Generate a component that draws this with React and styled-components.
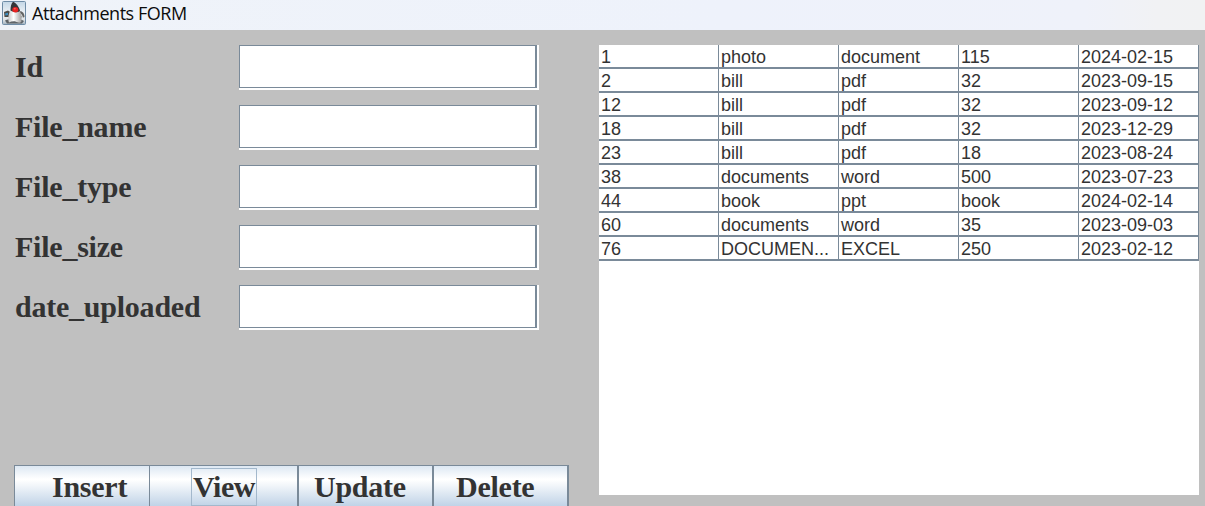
import React from "react";
import styled, { createGlobalStyle } from "styled-components";

const line = "#7a8a99";
const ink = "#333333";

const GlobalStyle = createGlobalStyle`
  * { box-sizing: border-box; }
  body { margin: 0; overflow: hidden; background: #c0c0c0; }
`;

const Window = styled.div`
  display: flex;
  flex-direction: column;
  width: 1205px;
  height: 506px;
  overflow: hidden;
  background: #c0c0c0;
`;

const TitleBar = styled.header`
  display: flex;
  align-items: flex-start;
  flex: 0 0 30px;
  padding-left: 2px;
  gap: 6px;
  background: linear-gradient(90deg, #eff3f9 0%, #eef2fb 60%, #eff2fa 90%, #f1f2f4 96%, #f1f2f3 100%);
`;

const AppIcon = styled.svg`
  display: block;
  width: 24px;
  height: 25px;
`;

const Title = styled.span`
  font: 18px/27px "Open Sans", "Noto Sans", sans-serif;
  letter-spacing: -0.45px;
  color: #0c0c0c;
  white-space: nowrap;
`;

const Content = styled.main`
  display: flex;
  flex: 1;
  min-height: 0;
  justify-content: space-between;
  padding: 15px 6px 0 14px;
`;

const Form = styled.form`
  display: flex;
  flex-direction: column;
  justify-content: space-between;
  width: 555px;
`;

const Fields = styled.div`
  display: flex;
  flex-direction: column;
  gap: 15px;
`;

const Field = styled.label`
  display: grid;
  grid-template-columns: 225px 300px;
  height: 45px;
`;

const Label = styled.span`
  padding-left: 1px;
  font: bold 30px/44px "Liberation Serif", "Times New Roman", serif;
  letter-spacing: -0.23px;
  color: ${ink};
`;

const InputFrame = styled.span`
  display: block;
  padding: 0 2px 2px 0;
  background: #fff;
`;

const Input = styled.input`
  display: block;
  width: 100%;
  height: 100%;
  padding: 0 6px;
  border: solid ${line};
  border-width: 1px 2px 1px 1px;
  border-radius: 0;
  outline: none;
  background: #fff;
  font: 18px "Liberation Sans", Arial, sans-serif;
`;

const ButtonBar = styled.div`
  display: flex;
  height: 41px;
`;

const Button = styled.button`
  width: ${(p) => p.$width}px;
  padding: 2px 0 0 ${(p) => p.$inset}px;
  border: solid ${line};
  border-width: 1px ${(p) => p.$edge}px 0 ${(p) => (p.$first ? 1 : 0)}px;
  border-radius: 0;
  background: linear-gradient(#dde8f3 0, #ffffff 13px, #ffffff 14px, #c0d3e7 40px);
  text-align: left;
  font: bold 30px/36px "Liberation Serif", "Times New Roman", serif;
  letter-spacing: -0.25px;
  color: ${ink};
`;

const Caption = styled.span`
  display: block;
  width: ${(p) => (p.$focused ? "66px" : "max-content")};
  height: 38px;
  padding-left: ${(p) => (p.$focused ? 1 : 0)}px;
  border: 1px solid ${(p) => (p.$focused ? "#a3b8cc" : "transparent")};
  letter-spacing: ${(p) => (p.$focused ? "-0.5px" : "inherit")};
`;

const TablePane = styled.section`
  width: 600px;
  height: 450px;
  background: #fff;
`;

const Table = styled.div`
  display: grid;
  grid-template-columns: repeat(5, 120px);
  grid-auto-rows: 24px;
`;

const Cell = styled.div`
  padding: 1px 0 0 2px;
  border: solid ${line};
  border-width: 0 1px 2px 0;
  overflow: hidden;
  text-overflow: ellipsis;
  white-space: nowrap;
  font: 18px/23px "Liberation Sans", Arial, sans-serif;
  color: ${ink};
`;

const labels = ["Id", "File_name", "File_type", "File_size", "date_uploaded"];

const buttons = [
  { text: "Insert", width: 136, inset: 36, edge: 1, first: true },
  { text: "View", width: 149, inset: 41, edge: 2, focused: true },
  { text: "Update", width: 135, inset: 14, edge: 2 },
  { text: "Delete", width: 135, inset: 21, edge: 2 },
];

const rows = [
  ["1", "photo", "document", "115", "2024-02-15"],
  ["2", "bill", "pdf", "32", "2023-09-15"],
  ["12", "bill", "pdf", "32", "2023-09-12"],
  ["18", "bill", "pdf", "32", "2023-12-29"],
  ["23", "bill", "pdf", "18", "2023-08-24"],
  ["38", "documents", "word", "500", "2023-07-23"],
  ["44", "book", "ppt", "book", "2024-02-14"],
  ["60", "documents", "word", "35", "2023-09-03"],
  ["76", "DOCUMEN...", "EXCEL", "250", "2023-02-12"],
];

function DukeIcon() {
  return (
    <AppIcon viewBox="0 0 24 25" aria-hidden="true">
      <defs>
        <linearGradient id="tile" x1="0" y1="0" x2="0" y2="1">
          <stop offset="0" stopColor="#c3d6e6" />
          <stop offset="0.5" stopColor="#eef2f6" />
          <stop offset="0.8" stopColor="#dfe3e6" />
          <stop offset="1" stopColor="#9fb0bd" />
        </linearGradient>
        <linearGradient id="body" x1="0" y1="0" x2="1" y2="0">
          <stop offset="0" stopColor="#c9c9c9" />
          <stop offset="0.4" stopColor="#ffffff" />
          <stop offset="1" stopColor="#a2a2a2" />
        </linearGradient>
      </defs>
      <rect x="0.5" y="1.5" width="23" height="23" rx="1" fill="url(#tile)" stroke="#6f8ca6" />
      <path d="M2 12 L6 10.500 L9 12.500 L7.500 17 L2.500 17Z" fill="#4c4a46" />
      <path d="M3 13.500 L6 12.800 L6 15 L3.500 15.500Z" fill="#3d8fc4" />
      <path d="M17 11.500 C20 10.500 22.500 13 22.500 17 L20 18 L18 15Z" fill="#636363" />
      <path d="M17 13.500 C19 13.500 20 15.500 20.500 18" fill="none" stroke="#ddd" strokeWidth="1.200" />
      <path d="M3 20.500 C7 18.500 18 18.500 22 21 L20 23.500 L5 23.500Z" fill="#5f6468" />
      <path d="M9.500 8 C6.500 13 5.500 19 7 22.500 C9 21.500 11.500 21 13.500 21.500 C16 22.500 18 23.500 19.500 21.500 C20 16 18.500 12 16.500 8Z" fill="url(#body)" />
      <path d="M11 1.800 C14 3 17 6.500 18 11 C15.500 12.800 12 12.500 8.500 10.500 C8.500 7 9 4 11 1.800Z" fill="#353538" />
      <ellipse cx="13.300" cy="9.700" rx="3" ry="2.700" fill="#e82222" />
      <ellipse cx="12.800" cy="8.800" rx="1" ry="0.700" fill="#ff6a62" />
    </AppIcon>
  );
}

export default function App() {
  return (
    <>
      <GlobalStyle />
      <Window>
        <TitleBar>
          <DukeIcon />
          <Title>Attachments FORM</Title>
        </TitleBar>
        <Content>
          <Form onSubmit={(e) => e.preventDefault()}>
            <Fields>
              {labels.map((label) => (
                <Field key={label}>
                  <Label>{label}</Label>
                  <InputFrame>
                    <Input type="text" />
                  </InputFrame>
                </Field>
              ))}
            </Fields>
            <ButtonBar>
              {buttons.map((b) => (
                <Button key={b.text} type="button" $width={b.width} $inset={b.inset} $edge={b.edge} $first={b.first}>
                  <Caption $focused={b.focused}>{b.text}</Caption>
                </Button>
              ))}
            </ButtonBar>
          </Form>
          <TablePane>
            <Table>
              {rows.map((row) => row.map((value, i) => <Cell key={`${row[0]}-${i}`}>{value}</Cell>))}
            </Table>
          </TablePane>
        </Content>
      </Window>
    </>
  );
}
